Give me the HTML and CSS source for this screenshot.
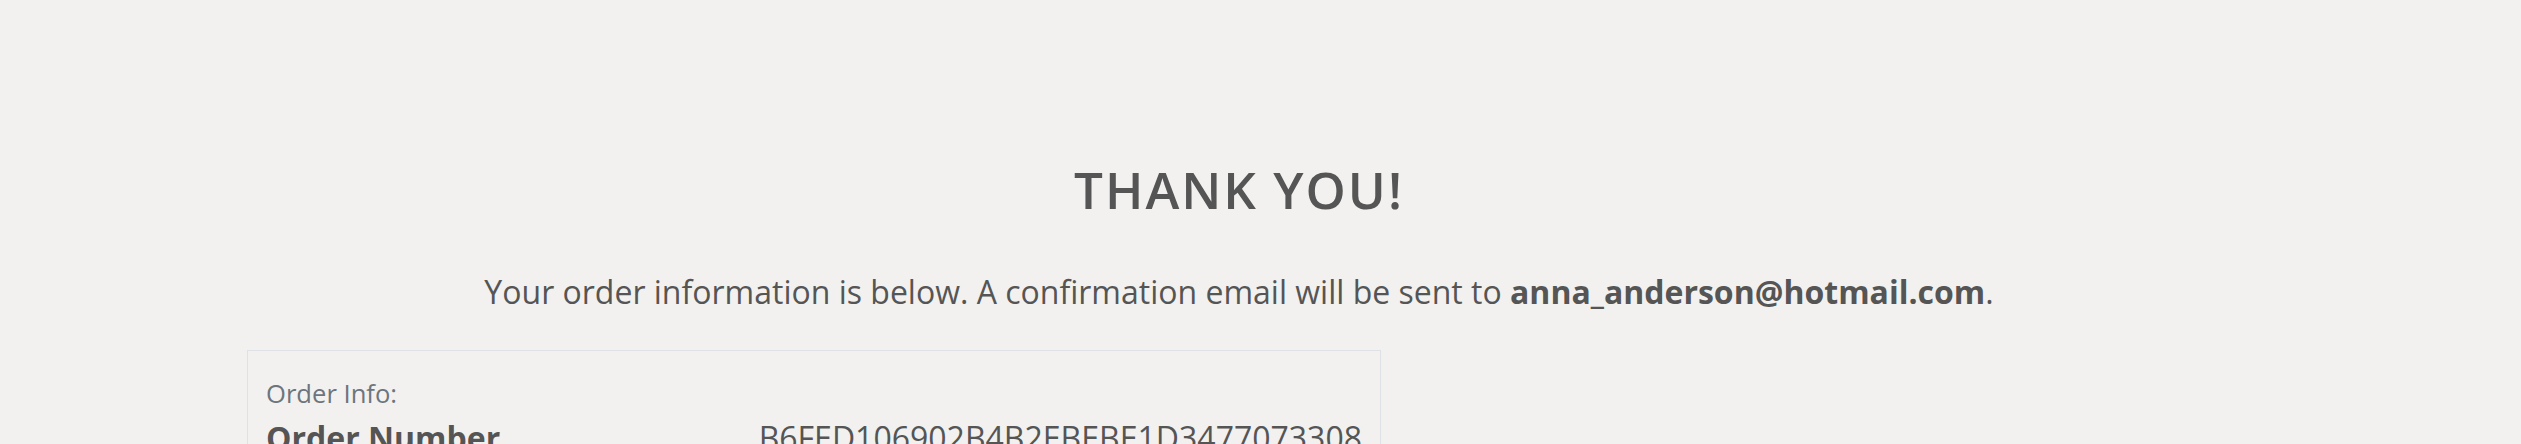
FILE: index.html
```html
<!DOCTYPE html>
<html lang="en">
<head>
<meta charset="utf-8">
<title>Thank you</title>
<link rel="stylesheet" href="styles.css">
</head>
<body>
<main class="page">
  <h1 class="title">THANK YOU!</h1>
  <p class="lead">Your order information is below. A confirmation email will be sent to <strong>anna_anderson@hotmail.com</strong>.</p>
  <div class="container">
    <section class="order-box">
      <div class="order-label">Order Info:</div>
      <div class="order-row">
        <span class="order-key">Order Number</span>
        <span class="order-value">B6FED106902B4B2EBEBE1D3477073308</span>
      </div>
    </section>
  </div>
</main>
</body>
</html>
```

FILE: styles.css
```css
html, body {
  margin: 0;
  padding: 0;
}
body {
  background: #f2f1ef;
  color: #555555;
  font-family: "Open Sans", "Noto Sans", sans-serif;
  overflow: hidden;
}
.page {
  padding: 159px 43px 0 0;
}
.title {
  margin: 0;
  text-align: center;
  font-size: 51.2px;
  font-weight: 600;
  line-height: 1.2;
  letter-spacing: 2px;
}
.lead {
  margin: 48px 0 0;
  text-align: center;
  font-size: 32px;
  line-height: 1.5;
}
.lead strong {
  font-weight: 700;
}
.container {
  width: 1984px;
  margin: 34px auto 0;
}
.order-box {
  width: 1134px;
  box-sizing: border-box;
  border: 1px solid #dee2e6;
  padding: 24px 18px;
}
.order-label {
  font-size: 25.6px;
  line-height: 1.5;
  color: #6c757d;
}
.order-row {
  margin-top: 0;
  display: flex;
  justify-content: space-between;
  font-size: 32px;
  line-height: 1.5;
}
.order-key {
  font-weight: 700;
}
```
